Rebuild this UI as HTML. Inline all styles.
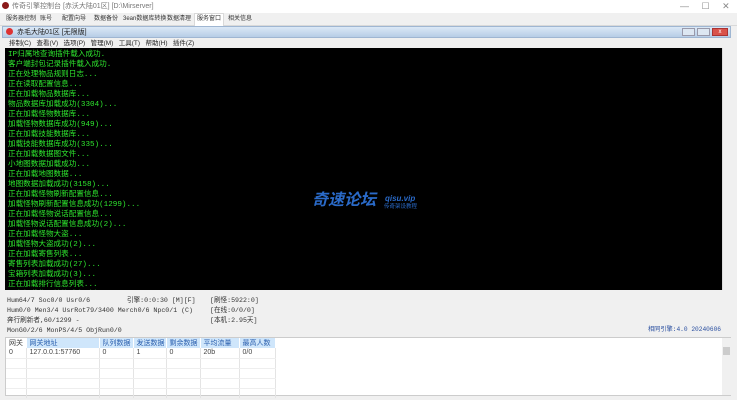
<!DOCTYPE html>
<html><head><meta charset="utf-8"><style>
*{margin:0;padding:0;box-sizing:border-box}
body{width:737px;height:400px;overflow:hidden;background:#f0f0f0;font-family:"Liberation Sans","Noto Sans CJK SC",sans-serif;font-size:7px;color:#222;position:relative}
.a{position:absolute;white-space:nowrap;line-height:9px}
#con{position:absolute;left:5px;top:48px;width:717px;height:242px;background:#000;overflow:hidden;padding:2px 0 0 3px;font-family:"Liberation Mono","Noto Sans CJK SC",monospace;font-size:7.6px;line-height:10px;color:#2ee62e}
.mono{font-family:"Liberation Mono","Noto Sans CJK SC",monospace;font-size:6.6px;color:#333}
table{border-collapse:collapse;font-size:7px}
td{height:10px;border-right:1px solid #e4e4e4;border-bottom:1px solid #eee;padding-left:3px;color:#444;line-height:9px}
th{font-weight:normal;background:#cfe6fb;color:#2a5fae;text-align:left;padding-left:3px;height:10px;border-right:1px solid #fff;line-height:9px}
.t{top:15px;font-size:6px;color:#333}
</style></head><body>
<div class="a" style="left:0;top:0;width:737px;height:13px;background:#fff"></div>
<div class="a" style="left:2px;top:2px;width:7px;height:7px;border-radius:50%;background:#8b1a1a"></div>
<div class="a" style="left:12px;top:2px;color:#777;font-size:7px">传奇引擎控制台 [赤沃大陆01区] [D:\Mirserver]</div>
<div class="a" style="left:680px;top:1px;color:#888;font-size:9px;line-height:10px">—&nbsp;&nbsp;&nbsp;&nbsp;&nbsp;☐&nbsp;&nbsp;&nbsp;&nbsp;&nbsp;✕</div>
<div class="a" style="left:0;top:13px;width:737px;height:13px;border-bottom:1px solid #d9d9d9"></div>
<div class="a" style="left:194px;top:13px;width:30px;height:13px;background:#fff;border:1px solid #d9d9d9;border-bottom:none"></div>
<div class="a t" style="left:6px">服务器控制</div>
<div class="a t" style="left:40px">账号</div>
<div class="a t" style="left:62px">配置向导</div>
<div class="a t" style="left:94px">数据备份</div>
<div class="a t" style="left:123px">3ean数据库转换</div>
<div class="a t" style="left:167px">数据清理</div>
<div class="a t" style="left:197px">服务窗口</div>
<div class="a t" style="left:228px">相关信息</div>
<div class="a" style="left:2px;top:26px;width:729px;height:12px;background:linear-gradient(#dbe8f6,#b7cde6);border:1px solid #9fb6d2"></div>
<div class="a" style="left:6px;top:28px;width:7px;height:7px;border-radius:50%;background:#d33"></div>
<div class="a" style="left:17px;top:28px;font-size:7px;color:#222">赤毛大陆01区 [无限版]</div>
<div class="a" style="left:682px;top:28px;width:13px;height:8px;background:#dde7f2;border:1px solid #99a"></div>
<div class="a" style="left:697px;top:28px;width:13px;height:8px;background:#dde7f2;border:1px solid #99a"></div>
<div class="a" style="left:712px;top:28px;width:16px;height:8px;background:#d9524a;border:1px solid #a33;color:#fff;font-size:6px;text-align:center;line-height:6px">x</div>
<div class="a" style="left:9px;top:39px;font-size:6.5px;color:#222">排制(C)&nbsp;&nbsp;&nbsp;查看(V)&nbsp;&nbsp;&nbsp;选项(P)&nbsp;&nbsp;&nbsp;管理(M)&nbsp;&nbsp;&nbsp;工具(T)&nbsp;&nbsp;&nbsp;帮助(H)&nbsp;&nbsp;&nbsp;插件(Z)</div>
<div id="con">IP归属地查询插件载入成功.<br>客户端封包记录插件载入成功.<br>正在处理物品规则日志...<br>正在读取配置信息...<br>正在加载物品数据库...<br>物品数据库加载成功(3304)...<br>正在加载怪物数据库...<br>加载怪物数据库成功(949)...<br>正在加载技能数据库...<br>加载技能数据库成功(335)...<br>正在加载数据图文件...<br>小地图数据加载成功...<br>正在加载地图数据...<br>地图数据加载成功(3158)...<br>正在加载怪物刷新配置信息...<br>加载怪物刷新配置信息成功(1299)...<br>正在加载怪物说话配置信息...<br>加载怪物说话配置信息成功(2)...<br>正在加载怪物大盗...<br>加载怪物大盗成功(2)...<br>正在加载寄售列表...<br>寄售列表加载成功(27)...<br>宝箱列表加载成功(3)...<br>正在加载排行信息列表...<br>正在加载物品技能威力列表...</div>
<div class="a" style="left:722px;top:48px;width:9px;height:242px;background:#f0f0f0;border-left:1px solid #ddd"></div>
<div class="a" style="left:312px;top:191px;font-size:16px;line-height:20px;font-weight:bold;color:#2a6ac8;font-style:italic">奇速论坛</div>
<div class="a" style="left:385px;top:194px;font-size:8px;font-weight:bold;color:#2a6ac8;font-style:italic">qisu.vip</div>
<div class="a" style="left:384px;top:203px;font-size:5.5px;color:#2a6ac8">传奇架设教程</div>
<div class="a mono" style="left:7px;top:296px">Hum64/7 Soc0/0 Usr0/6</div>
<div class="a mono" style="left:127px;top:296px">引擎:0:0:30 [M][F]</div>
<div class="a mono" style="left:210px;top:296px">[刷怪:5922:0]</div>
<div class="a mono" style="left:7px;top:306px">Hum0/0 Men3/4 UsrRot79/3400 Merch0/6 Npc0/1 (C)</div>
<div class="a mono" style="left:210px;top:306px">[在线:0/0/0]</div>
<div class="a mono" style="left:7px;top:316px">奔行刷新者,60/1299 -</div>
<div class="a mono" style="left:210px;top:316px">[本机:2.95天]</div>
<div class="a mono" style="left:7px;top:326px">MonG0/2/6 MonPS/4/5 ObjRun0/0</div>
<div class="a mono" style="left:648px;top:325px;color:#2a4fa0;font-size:6.2px">相同引擎:4.0 20240606</div>
<div class="a" style="left:5px;top:337px;width:726px;height:59px;background:#fff;border:1px solid #ccc"></div>
<div class="a" style="left:722px;top:338px;width:9px;height:57px;background:#f0f0f0"></div>
<div class="a" style="left:723px;top:347px;width:7px;height:8px;background:#ccc"></div>
<table class="a" style="left:6px;top:338px">
<tr><th style="width:20px;background:#fff;color:#444">网关</th><th style="width:73px">网关地址</th><th style="width:34px">队列数据</th><th style="width:33px">发送数据</th><th style="width:34px">剩余数据</th><th style="width:39px">平均流量</th><th style="width:36px">最高人数</th></tr>
<tr><td>0</td><td>127.0.0.1:57760</td><td>0</td><td>1</td><td>0</td><td>20b</td><td>0/0</td></tr>
<tr><td></td><td></td><td></td><td></td><td></td><td></td><td></td></tr>
<tr><td></td><td></td><td></td><td></td><td></td><td></td><td></td></tr>
<tr><td></td><td></td><td></td><td></td><td></td><td></td><td></td></tr>
<tr><td></td><td></td><td></td><td></td><td></td><td></td><td></td></tr>
</table>
</body></html>
